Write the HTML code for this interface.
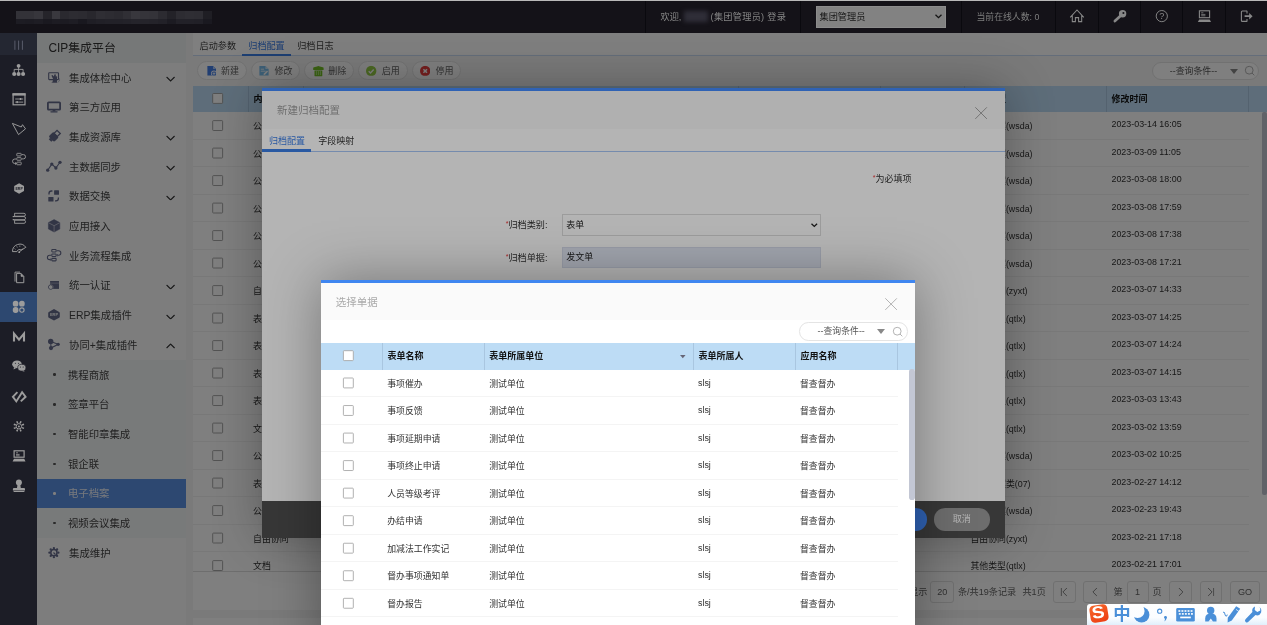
<!DOCTYPE html><html lang="zh"><head><meta charset="utf-8"><title>CIP</title><style>
*{box-sizing:border-box;margin:0;padding:0}
html,body{width:1267px;height:625px;overflow:hidden;background:#f5f5f5;font-family:"Liberation Sans","Noto Sans CJK SC",sans-serif;font-size:9px;color:#333}
.abs{position:absolute}
#top{position:absolute;left:0;top:0;width:1267px;height:33px;background:#141218;color:#fff;box-shadow:-4px 0 0 #141218,4px 0 0 #141218,0 -4px 0 #141218,-4px -4px 0 #141218,4px -4px 0 #141218}
#top .sep{position:absolute;top:0;width:1px;height:33px;background:#0a090e}
#top .t{position:absolute;top:0.8px;height:33px;line-height:33px;font-size:9.2px;color:#868686;white-space:nowrap}
#topsel{position:absolute;left:815.5px;top:5.5px;width:130px;height:22.3px;background:#828282;border:1px solid #8c8c8c;color:#161616;font-size:9.2px;line-height:20.3px;padding-left:3px}
#ibar{position:absolute;left:0;top:33px;width:37px;height:600px;background:#1c1d26;box-shadow:-4px 0 0 #1c1d26}
#ibar .c{position:absolute;left:0;width:37px;height:29.65px}
#ibar .c svg{position:absolute;left:50%;top:50%;transform:translate(-50%,-50%)}
#menu{position:absolute;left:37px;top:33px;width:148.6px;height:600px;background:#fbfcfd}
#menu .title{position:absolute;left:0;top:0;width:100%;height:29.8px;background:#eef1f3;font-size:11.9px;line-height:31.8px;padding-left:11.4px;color:#333}
#menu .it{position:absolute;left:0;width:100%;height:29.7px;line-height:29.7px;font-size:10.4px;color:#444;white-space:nowrap}
#menu .it .tx{position:absolute;left:32px;top:0.8px}
#menu .it svg.ic{position:absolute;left:10px;top:50%;transform:translateY(-50%)}
#menu .it svg.ch{position:absolute;left:129px;top:50%;margin-top:1.3px;transform:translateY(-50%)}
#menu .sub{position:absolute;left:0;width:100%;background:#f3f5f6}
#menu .it.on{background:#5b92e4;color:#f0f3fa}
#menu .dot{position:absolute;left:16.2px;top:50%;width:2.4px;height:2.4px;margin-top:-1.2px;border-radius:50%;background:#555}
#menu .it.on .dot{background:#fff}
#main{position:absolute;left:193px;top:33px;width:1080px;height:577px}
#main2{position:absolute;left:193px;top:617.6px;width:1080px;height:14px;background:#fff}
.tabs{position:absolute;left:0;top:0;width:100%;height:22.6px;border-bottom:1px solid #c9dcf5;background:#fff}
.tabs span{position:absolute;top:1.5px;height:22.6px;line-height:22px;font-size:9.1px;color:#444;white-space:nowrap}
.tabs span.on{color:#3b7ee6}
.tabs i{position:absolute;bottom:-1px;height:1.8px;background:#3b7ee6}
.tb{position:absolute;height:19px;border:1px solid #e6e6e6;border-radius:9.5px;background:#fff;font-size:9px;line-height:18.6px;color:#666;white-space:nowrap}
.tb svg{position:absolute;left:9px;top:50%;transform:translateY(-50%)}
.tb span{position:absolute;left:22.8px;top:0}
.pill{position:absolute;height:18.6px;border:1px solid #e4e4e4;border-radius:9.3px;background:#fff;font-size:8.9px;color:#555;white-space:nowrap}
.th{position:absolute;background:#bddcf5;font-weight:bold;color:#111}
.th .c,.tr .c{position:absolute;top:0;height:100%;white-space:nowrap;overflow:hidden}
.th .c{border-right:1px solid #a9c6e0}
.tr{position:absolute;border-bottom:1px solid #f2f2f2;color:#333}
.cb{position:absolute;width:10.7px;height:10.7px;border:1px solid #c8c8c8;background:#fff;border-radius:1px}
.mask{position:absolute;left:-4px;top:-4px;width:1275px;height:633px;background:rgba(0,0,0,0.295)}
#all{position:absolute;left:-4px;top:-4px;width:1275px;height:633px;overflow:hidden;background:#f5f5f5;filter:blur(0.3px)}
#in{position:absolute;left:4px;top:4px;width:1267px;height:625px}
</style></head><body><div id="all"><div id="in">
<div id="menu"><div class="title">CIP集成平台</div>
<div class="it" style="top:29.80px"><span class="tx">集成体检中心</span><svg class="ch" width="9.2" height="5.6" viewBox="0 0 9.2 5.6" style=""><path d="M0.6 0.8 L4.6 4.8 L8.6 0.8" fill="none" stroke="#333" stroke-width="1.1"/></svg></div>
<div class="it" style="top:59.50px"><span class="tx">第三方应用</span></div>
<div class="it" style="top:89.20px"><span class="tx">集成资源库</span><svg class="ch" width="9.2" height="5.6" viewBox="0 0 9.2 5.6" style=""><path d="M0.6 0.8 L4.6 4.8 L8.6 0.8" fill="none" stroke="#333" stroke-width="1.1"/></svg></div>
<div class="it" style="top:118.90px"><span class="tx">主数据同步</span><svg class="ch" width="9.2" height="5.6" viewBox="0 0 9.2 5.6" style=""><path d="M0.6 0.8 L4.6 4.8 L8.6 0.8" fill="none" stroke="#333" stroke-width="1.1"/></svg></div>
<div class="it" style="top:148.60px"><span class="tx">数据交换</span><svg class="ch" width="9.2" height="5.6" viewBox="0 0 9.2 5.6" style=""><path d="M0.6 0.8 L4.6 4.8 L8.6 0.8" fill="none" stroke="#333" stroke-width="1.1"/></svg></div>
<div class="it" style="top:178.30px"><span class="tx">应用接入</span></div>
<div class="it" style="top:208.00px"><span class="tx">业务流程集成</span></div>
<div class="it" style="top:237.70px"><span class="tx">统一认证</span><svg class="ch" width="9.2" height="5.6" viewBox="0 0 9.2 5.6" style=""><path d="M0.6 0.8 L4.6 4.8 L8.6 0.8" fill="none" stroke="#333" stroke-width="1.1"/></svg></div>
<div class="it" style="top:267.40px"><span class="tx">ERP集成插件</span><svg class="ch" width="9.2" height="5.6" viewBox="0 0 9.2 5.6" style=""><path d="M0.6 0.8 L4.6 4.8 L8.6 0.8" fill="none" stroke="#333" stroke-width="1.1"/></svg></div>
<div class="it" style="top:297.10px"><span class="tx">协同+集成插件</span><svg class="ch" width="9.2" height="5.6" viewBox="0 0 9.2 5.6" style=""><path d="M0.6 4.8 L4.6 0.8 L8.6 4.8" fill="none" stroke="#333" stroke-width="1.1"/></svg></div>
<div class="sub" style="top:326.80px;height:178.20px"></div>
<div class="it" style="top:326.80px"><i class="dot"></i><span class="tx" style="left:30.9px">携程商旅</span></div>
<div class="it" style="top:356.50px"><i class="dot"></i><span class="tx" style="left:30.9px">签章平台</span></div>
<div class="it" style="top:386.20px"><i class="dot"></i><span class="tx" style="left:30.9px">智能印章集成</span></div>
<div class="it" style="top:415.90px"><i class="dot"></i><span class="tx" style="left:30.9px">银企联</span></div>
<div class="it on" style="top:445.60px"><i class="dot"></i><span class="tx" style="left:30.9px">电子档案</span></div>
<div class="it" style="top:475.30px"><i class="dot"></i><span class="tx" style="left:30.9px">视频会议集成</span></div>
<div class="it" style="top:505.00px"><span class="tx">集成维护</span></div>
<svg width="149" height="592" viewBox="37 33 149 592" style="position:absolute;left:0;top:0"><rect x="48.7" y="72.7" width="9.8" height="6.9" rx="0.6" fill="none" stroke="#666b8c" stroke-width="1.1"/><path d="M51.4 75.6 L52.6 74.9 L53.7 76.5 L54.6 74.2 L55.8 74.5 L55.8 76.4 L57 76.2 L57 82.4 L52.3 82.4 L53.2 79.2 Z" fill="#666b8c"/><path d="M57.6 77.2 a2.6 2.6 0 0 1 0.4 4.9" fill="none" stroke="#666b8c" stroke-width="0.6" opacity="0.7"/><path d="M51.6 82.6 H57.4" stroke="#666b8c" stroke-width="0.7" opacity="0.7"/><rect x="47.9" y="102.4" width="12.2" height="7.2" rx="0.7" fill="none" stroke="#666b8c" stroke-width="1.8"/><rect x="52.6" y="110" width="2.8" height="1.4" fill="#666b8c"/><rect x="50.4" y="111.2" width="7.2" height="1.2" rx="0.4" fill="#666b8c"/><g transform="translate(53.7 136.9) rotate(45)"><rect x="-3.9" y="-3.4" width="7.8" height="6.8" rx="1.4" fill="#666b8c"/><rect x="-2.3" y="-7" width="4.6" height="4.4" fill="none" stroke="#666b8c" stroke-width="1.3"/><rect x="-1.8" y="3" width="3.6" height="2.2" fill="#666b8c"/></g><path d="M47.7 170.2 L51.8 164.1 L55.9 168 L60 162.3" fill="none" stroke="#666b8c" stroke-width="1.1"/><circle cx="47.7" cy="170.2" r="1.65" fill="#666b8c"/><circle cx="51.8" cy="164.1" r="1.65" fill="#666b8c"/><circle cx="55.9" cy="168" r="1.65" fill="#666b8c"/><circle cx="60" cy="162.3" r="1.65" fill="#666b8c"/><rect x="54.1" y="190.3" width="4.9" height="4.5" rx="0.5" fill="#666b8c"/><rect x="48.3" y="196.9" width="5.2" height="4.6" rx="0.5" fill="#666b8c"/><path d="M49 194.4 V193.4 a2.4 2.4 0 0 1 2.4 -2.4 H52.4 M58.4 197.4 V198.4 a2.4 2.4 0 0 1 -2.4 2.4 H55" fill="none" stroke="#666b8c" stroke-width="1.3"/><path d="M54.1 219.6 L59.8 222.6 V229 L54.1 232 L48.4 229 V222.6 Z" fill="#666b8c" stroke="#666b8c" stroke-width="0.5" stroke-linejoin="round"/><path d="M48.6 222.8 L54.1 225.7 L59.6 222.8 M54.1 225.7 V231.8" fill="none" stroke="#fbfcfd" stroke-width="0.7" opacity="0.75"/><rect x="51.8" y="249.45" width="4.3" height="2.5" rx="0.6" fill="none" stroke="#666b8c" stroke-width="1.05"/><rect x="51.8" y="253.95" width="4.3" height="2.5" rx="0.6" fill="none" stroke="#666b8c" stroke-width="1.05"/><rect x="51.8" y="258.35" width="4.3" height="2.5" rx="0.6" fill="none" stroke="#666b8c" stroke-width="1.05"/><path d="M56.8 250.7 H58.6 a2.25 2.25 0 0 1 0 4.5 H57.2 M51 255.2 H49.6 a2.2 2.2 0 0 0 0 4.4 H50.6" fill="none" stroke="#666b8c" stroke-width="1.05"/><path d="M57.9 254.2 L56.8 255.2 L57.9 256.2 M50 258.6 L51.1 259.6 L50 260.6" fill="none" stroke="#666b8c" stroke-width="0.7"/><rect x="50.1" y="281" width="8.9" height="7.9" fill="#666b8c"/><path d="M50.1 283.1 H59" stroke="#fbfcfd" stroke-width="0.5" opacity="0.7"/><circle cx="50.7" cy="287.1" r="2.7" fill="#fbfcfd"/><circle cx="50.7" cy="287.1" r="2.2" fill="none" stroke="#666b8c" stroke-width="0.9"/><circle cx="50.7" cy="287.1" r="1.7" fill="#fbfcfd"/><path d="M54 309 L59.2 311.9 Q59.8 312.2 59.8 312.9 V316.7 Q59.8 317.4 59.2 317.7 L54 320.6 L48.8 317.7 Q48.2 317.4 48.2 316.7 V312.9 Q48.2 312.2 48.8 311.9 Z" fill="#666b8c"/><text x="54" y="316.2" font-size="4" font-weight="bold" text-anchor="middle" fill="#fbfcfd" font-family="Liberation Sans,sans-serif">ERP</text><path d="M50.7 341.4 L58.2 344.3 L51 348.1 Z" fill="none" stroke="#666b8c" stroke-width="1.1"/><circle cx="50.7" cy="341.4" r="2.7" fill="#666b8c"/><circle cx="58.2" cy="344.3" r="1.6" fill="#666b8c"/><circle cx="51" cy="348.1" r="2.1" fill="#666b8c"/><circle cx="58.40" cy="552.70" r="1.15" fill="#666b8c"/><circle cx="57.08" cy="555.88" r="1.15" fill="#666b8c"/><circle cx="53.90" cy="557.20" r="1.15" fill="#666b8c"/><circle cx="50.72" cy="555.88" r="1.15" fill="#666b8c"/><circle cx="49.40" cy="552.70" r="1.15" fill="#666b8c"/><circle cx="50.72" cy="549.52" r="1.15" fill="#666b8c"/><circle cx="53.90" cy="548.20" r="1.15" fill="#666b8c"/><circle cx="57.08" cy="549.52" r="1.15" fill="#666b8c"/><circle cx="53.9" cy="552.7" r="3.1" fill="none" stroke="#666b8c" stroke-width="1.5"/><path d="M53.5 552.5 l1.8 1.8" stroke="#666b8c" stroke-width="1.2"/></svg>
</div>
<div id="main">
<div class="tabs"><span style="left:6.6px">启动参数</span><span class="on" style="left:55.3px">归档配置</span><span style="left:104.2px">归档日志</span><i style="left:48.8px;width:48.8px"></i></div>
<div class="tb" style="left:4.2px;top:28.2px;width:49.6px"><svg width="9.6" height="10.8" viewBox="0 0 9.6 10.8" style="left:8.4px"><path d="M0.4 0.3 H6 L9.2 3.4 V10.6 H0.4 Z" fill="#457fe6"/><path d="M6 0.3 V3.4 H9.2 Z" fill="#a9c8fa"/><circle cx="7" cy="8" r="3" fill="#f4f7ff"/><circle cx="7" cy="8" r="2.2" fill="#457fe6"/><path d="M7 6.6 V9.4 M5.6 8 H8.4" stroke="#fff" stroke-width="0.8"/></svg><span>新建</span></div>
<div class="tb" style="left:57.8px;top:28.2px;width:49.6px"><svg width="10" height="10.8" viewBox="0 0 10 10.8" style="left:7.5px"><path d="M0.4 0.3 H6.4 L9.6 3.4 V10.6 H0.4 Z" fill="#7cc0ee"/><path d="M6.4 0.3 V3.4 H9.6 Z" fill="#cfe8fa"/><path d="M1.8 3.6 H5 M1.8 5.6 H6.6" stroke="#fff" stroke-width="0.8"/><path d="M4.4 9.6 L4.9 7.9 L8 4.9 L9.1 6 L6 9.1 Z" fill="#fff"/></svg><span>修改</span></div>
<div class="tb" style="left:111.4px;top:28.2px;width:49.6px"><svg width="10.8" height="11" viewBox="0 0 10.8 11" style="left:7.7px"><path d="M0.2 4.4 V2.6 Q0.2 1.9 1 1.8 L4 0.9 Q5.4 0.2 6.8 0.9 L9.8 1.8 Q10.6 1.9 10.6 2.6 V4.4 Z" fill="#76c625"/><path d="M1.5 5 H9.3 V10.2 Q9.3 10.9 8.6 10.9 H2.2 Q1.5 10.9 1.5 10.2 Z" fill="#76c625"/><path d="M3.4 5.6 V9.6 M5.4 5.6 V9.6 M7.4 5.6 V9.6" stroke="#c2ec98" stroke-width="0.8"/></svg><span>删除</span></div>
<div class="tb" style="left:165.0px;top:28.2px;width:49.6px"><svg width="10.4" height="10.4" viewBox="0 0 10.4 10.4" style="left:7.4px"><circle cx="5.2" cy="5.2" r="5.2" fill="#98d048"/><path d="M2.7 5.4 L4.5 7.1 L7.7 3.8" fill="none" stroke="#fff" stroke-width="1.4"/></svg><span>启用</span></div>
<div class="tb" style="left:218.6px;top:28.2px;width:49.6px"><svg width="10.4" height="10.4" viewBox="0 0 10.4 10.4" style="left:7.4px"><circle cx="5.2" cy="5.2" r="5.2" fill="#ea4040"/><path d="M3.4 3.4 L7 7 M7 3.4 L3.4 7" fill="none" stroke="#fff" stroke-width="1.6"/></svg><span>停用</span></div>
<div class="pill" style="left:958.8px;top:28.5px;width:107.6px;line-height:16.6px"><span class="abs" style="left:17px;top:0">--查询条件--</span><svg width="8" height="5" viewBox="0 0 8 5" style="position:absolute;left:77.50px;top:6.70px;overflow:visible"><path d="M0 0 H8 L4 5 Z" fill="#888"/></svg><svg width="9.5" height="9.5" viewBox="0 0 9.5 9.5" style="position:absolute;left:92.65px;top:3.85px;overflow:visible"><circle cx="4.2" cy="4.2" r="3.9" fill="none" stroke="#aaa" stroke-width="0.9"/><path d="M7 7 L9.3 9.3" stroke="#aaa" stroke-width="0.9"/></svg></div>
<div class="abs" style="left:0;top:52.7px;width:1080px;height:524.3px;background:#fff"></div>
<div class="th" style="left:0;top:52.7px;width:1080px;height:26.4px;line-height:26.4px;font-size:9px">
<div class="c" style="left:0.0px;width:55.6px;padding-left:5px"></div>
<div class="c" style="left:55.6px;width:55.6px;padding-left:5px">内容类型</div>
<div class="c" style="left:111.2px;width:434.8px;padding-left:5px">单据名称</div>
<div class="c" style="left:546.0px;width:142.3px;padding-left:5px">创建人</div>
<div class="c" style="left:688.3px;width:83.7px;padding-left:5px">状态</div>
<div class="c" style="left:772.0px;width:141.5px;padding-left:5px">档案类型</div>
<div class="c" style="left:913.5px;width:142.0px;padding-left:5px">修改时间</div>
</div>
<div class="tr" style="left:0;top:79.10px;width:1055.5px;height:27.50px;line-height:25px;font-size:8.9px">
<div class="c" style="left:60.1px;width:50px;line-height:29px">公文</div>
<div class="c" style="left:116.2px;width:300px;line-height:29px">发文单</div>
<div class="c" style="left:777.4px;width:130px;line-height:29px">文书档案(wsda)</div>
<div class="c" style="left:918.5px;width:130px;line-height:25px">2023-03-14 16:05</div>
</div>
<div class="tr" style="left:0;top:106.60px;width:1055.5px;height:27.50px;line-height:25px;font-size:8.9px">
<div class="c" style="left:60.1px;width:50px;line-height:29px">公文</div>
<div class="c" style="left:116.2px;width:300px;line-height:29px">收文单</div>
<div class="c" style="left:777.4px;width:130px;line-height:29px">文书档案(wsda)</div>
<div class="c" style="left:918.5px;width:130px;line-height:25px">2023-03-09 11:05</div>
</div>
<div class="tr" style="left:0;top:134.10px;width:1055.5px;height:27.50px;line-height:25px;font-size:8.9px">
<div class="c" style="left:60.1px;width:50px;line-height:29px">公文</div>
<div class="c" style="left:116.2px;width:300px;line-height:29px">签报单</div>
<div class="c" style="left:777.4px;width:130px;line-height:29px">文书档案(wsda)</div>
<div class="c" style="left:918.5px;width:130px;line-height:25px">2023-03-08 18:00</div>
</div>
<div class="tr" style="left:0;top:161.60px;width:1055.5px;height:27.50px;line-height:25px;font-size:8.9px">
<div class="c" style="left:60.1px;width:50px;line-height:29px">公文</div>
<div class="c" style="left:116.2px;width:300px;line-height:29px">发文单</div>
<div class="c" style="left:777.4px;width:130px;line-height:29px">文书档案(wsda)</div>
<div class="c" style="left:918.5px;width:130px;line-height:25px">2023-03-08 17:59</div>
</div>
<div class="tr" style="left:0;top:189.10px;width:1055.5px;height:27.50px;line-height:25px;font-size:8.9px">
<div class="c" style="left:60.1px;width:50px;line-height:29px">公文</div>
<div class="c" style="left:116.2px;width:300px;line-height:29px">收文单</div>
<div class="c" style="left:777.4px;width:130px;line-height:29px">文书档案(wsda)</div>
<div class="c" style="left:918.5px;width:130px;line-height:25px">2023-03-08 17:38</div>
</div>
<div class="tr" style="left:0;top:216.60px;width:1055.5px;height:27.50px;line-height:25px;font-size:8.9px">
<div class="c" style="left:60.1px;width:50px;line-height:29px">公文</div>
<div class="c" style="left:116.2px;width:300px;line-height:29px">发文单</div>
<div class="c" style="left:777.4px;width:130px;line-height:29px">文书档案(wsda)</div>
<div class="c" style="left:918.5px;width:130px;line-height:25px">2023-03-08 17:21</div>
</div>
<div class="tr" style="left:0;top:244.10px;width:1055.5px;height:27.50px;line-height:25px;font-size:8.9px">
<div class="c" style="left:60.1px;width:50px;line-height:29px">自由协同</div>
<div class="c" style="left:116.2px;width:300px;line-height:29px">自由协同</div>
<div class="c" style="left:777.4px;width:130px;line-height:29px">自由协同(zyxt)</div>
<div class="c" style="left:918.5px;width:130px;line-height:25px">2023-03-07 14:33</div>
</div>
<div class="tr" style="left:0;top:271.60px;width:1055.5px;height:27.50px;line-height:25px;font-size:8.9px">
<div class="c" style="left:60.1px;width:50px;line-height:29px">表单</div>
<div class="c" style="left:116.2px;width:300px;line-height:29px">事项催办</div>
<div class="c" style="left:777.4px;width:130px;line-height:29px">其他类型(qtlx)</div>
<div class="c" style="left:918.5px;width:130px;line-height:25px">2023-03-07 14:25</div>
</div>
<div class="tr" style="left:0;top:299.10px;width:1055.5px;height:27.50px;line-height:25px;font-size:8.9px">
<div class="c" style="left:60.1px;width:50px;line-height:29px">表单</div>
<div class="c" style="left:116.2px;width:300px;line-height:29px">事项反馈</div>
<div class="c" style="left:777.4px;width:130px;line-height:29px">其他类型(qtlx)</div>
<div class="c" style="left:918.5px;width:130px;line-height:25px">2023-03-07 14:24</div>
</div>
<div class="tr" style="left:0;top:326.60px;width:1055.5px;height:27.50px;line-height:25px;font-size:8.9px">
<div class="c" style="left:60.1px;width:50px;line-height:29px">表单</div>
<div class="c" style="left:116.2px;width:300px;line-height:29px">办结申请</div>
<div class="c" style="left:777.4px;width:130px;line-height:29px">其他类型(qtlx)</div>
<div class="c" style="left:918.5px;width:130px;line-height:25px">2023-03-07 14:15</div>
</div>
<div class="tr" style="left:0;top:354.10px;width:1055.5px;height:27.50px;line-height:25px;font-size:8.9px">
<div class="c" style="left:60.1px;width:50px;line-height:29px">表单</div>
<div class="c" style="left:116.2px;width:300px;line-height:29px">督办报告</div>
<div class="c" style="left:777.4px;width:130px;line-height:29px">其他类型(qtlx)</div>
<div class="c" style="left:918.5px;width:130px;line-height:25px">2023-03-03 13:43</div>
</div>
<div class="tr" style="left:0;top:381.60px;width:1055.5px;height:27.50px;line-height:25px;font-size:8.9px">
<div class="c" style="left:60.1px;width:50px;line-height:29px">文档</div>
<div class="c" style="left:116.2px;width:300px;line-height:29px">文档</div>
<div class="c" style="left:777.4px;width:130px;line-height:29px">其他类型(qtlx)</div>
<div class="c" style="left:918.5px;width:130px;line-height:25px">2023-03-02 13:59</div>
</div>
<div class="tr" style="left:0;top:409.10px;width:1055.5px;height:27.50px;line-height:25px;font-size:8.9px">
<div class="c" style="left:60.1px;width:50px;line-height:29px">公文</div>
<div class="c" style="left:116.2px;width:300px;line-height:29px">发文单</div>
<div class="c" style="left:777.4px;width:130px;line-height:29px">文书档案(wsda)</div>
<div class="c" style="left:918.5px;width:130px;line-height:25px">2023-03-02 10:25</div>
</div>
<div class="tr" style="left:0;top:436.60px;width:1055.5px;height:27.50px;line-height:25px;font-size:8.9px">
<div class="c" style="left:60.1px;width:50px;line-height:29px">表单</div>
<div class="c" style="left:116.2px;width:300px;line-height:29px">人员等级考评</div>
<div class="c" style="left:777.4px;width:130px;line-height:29px">合同档案类(07)</div>
<div class="c" style="left:918.5px;width:130px;line-height:25px">2023-02-27 14:12</div>
</div>
<div class="tr" style="left:0;top:464.10px;width:1055.5px;height:27.50px;line-height:25px;font-size:8.9px">
<div class="c" style="left:60.1px;width:50px;line-height:29px">公文</div>
<div class="c" style="left:116.2px;width:300px;line-height:29px">收文单</div>
<div class="c" style="left:777.4px;width:130px;line-height:29px">文书档案(wsda)</div>
<div class="c" style="left:918.5px;width:130px;line-height:25px">2023-02-23 19:43</div>
</div>
<div class="tr" style="left:0;top:491.60px;width:1055.5px;height:27.50px;line-height:25px;font-size:8.9px">
<div class="c" style="left:60.1px;width:50px;line-height:29px">自由协同</div>
<div class="c" style="left:116.2px;width:300px;line-height:29px"></div>
<div class="c" style="left:777.4px;width:130px;line-height:29px">自由协同(zyxt)</div>
<div class="c" style="left:918.5px;width:130px;line-height:25px">2023-02-21 17:18</div>
</div>
<div class="tr" style="left:0;top:519.10px;width:1055.5px;height:25.40px;line-height:25px;font-size:8.9px;border-bottom:none">
<div class="c" style="left:60.1px;width:50px;line-height:29px">文档</div>
<div class="c" style="left:116.2px;width:300px;line-height:29px"></div>
<div class="c" style="left:777.4px;width:130px;line-height:29px">其他类型(qtlx)</div>
<div class="c" style="left:918.5px;width:130px;line-height:25px">2023-02-21 17:01</div>
</div>
<svg width="60" height="577" viewBox="193 33 60 577" style="position:absolute;left:0;top:0"><rect x="212.70" y="93.50" width="9.9" height="9.9" rx="0.7" fill="#fff" stroke="#9e9e9e" stroke-width="0.9"/><rect x="212.70" y="120.60" width="9.9" height="9.9" rx="0.7" fill="#fff" stroke="#9e9e9e" stroke-width="0.9"/><rect x="212.70" y="148.10" width="9.9" height="9.9" rx="0.7" fill="#fff" stroke="#9e9e9e" stroke-width="0.9"/><rect x="212.70" y="175.60" width="9.9" height="9.9" rx="0.7" fill="#fff" stroke="#9e9e9e" stroke-width="0.9"/><rect x="212.70" y="203.10" width="9.9" height="9.9" rx="0.7" fill="#fff" stroke="#9e9e9e" stroke-width="0.9"/><rect x="212.70" y="230.60" width="9.9" height="9.9" rx="0.7" fill="#fff" stroke="#9e9e9e" stroke-width="0.9"/><rect x="212.70" y="258.10" width="9.9" height="9.9" rx="0.7" fill="#fff" stroke="#9e9e9e" stroke-width="0.9"/><rect x="212.70" y="285.60" width="9.9" height="9.9" rx="0.7" fill="#fff" stroke="#9e9e9e" stroke-width="0.9"/><rect x="212.70" y="313.10" width="9.9" height="9.9" rx="0.7" fill="#fff" stroke="#9e9e9e" stroke-width="0.9"/><rect x="212.70" y="340.60" width="9.9" height="9.9" rx="0.7" fill="#fff" stroke="#9e9e9e" stroke-width="0.9"/><rect x="212.70" y="368.10" width="9.9" height="9.9" rx="0.7" fill="#fff" stroke="#9e9e9e" stroke-width="0.9"/><rect x="212.70" y="395.60" width="9.9" height="9.9" rx="0.7" fill="#fff" stroke="#9e9e9e" stroke-width="0.9"/><rect x="212.70" y="423.10" width="9.9" height="9.9" rx="0.7" fill="#fff" stroke="#9e9e9e" stroke-width="0.9"/><rect x="212.70" y="450.60" width="9.9" height="9.9" rx="0.7" fill="#fff" stroke="#9e9e9e" stroke-width="0.9"/><rect x="212.70" y="478.10" width="9.9" height="9.9" rx="0.7" fill="#fff" stroke="#9e9e9e" stroke-width="0.9"/><rect x="212.70" y="505.60" width="9.9" height="9.9" rx="0.7" fill="#fff" stroke="#9e9e9e" stroke-width="0.9"/><rect x="212.70" y="533.10" width="9.9" height="9.9" rx="0.7" fill="#fff" stroke="#9e9e9e" stroke-width="0.9"/><rect x="212.70" y="560.60" width="9.9" height="9.9" rx="0.7" fill="#fff" stroke="#9e9e9e" stroke-width="0.9"/></svg>
<div class="abs" style="left:1069px;top:79.1px;width:5px;height:382.5px;background:#c4c6d2;border-radius:2px"></div>
<div class="abs" style="left:0;top:538.2px;width:1080px;height:38.8px;border-top:1px solid #dedede;background:#fff;font-size:9.1px;color:#666">
<span class="abs" style="left:698px;top:0;line-height:40px">每页显示</span>
<div class="abs" style="left:737.4px;top:8.6px;width:23.8px;height:22.6px;border:1px solid #e2e2e2;border-radius:3px;background:#fff;text-align:center;line-height:21.4px;">20</div>
<span class="abs" style="left:765px;top:0;line-height:40px">条/共19条记录</span>
<span class="abs" style="left:829.5px;top:0;line-height:40px">共1页</span>
<div class="abs" style="left:859.7px;top:8.6px;width:23.3px;height:22.6px;border:1px solid #e2e2e2;border-radius:3px;background:#fff;text-align:center;line-height:21.4px;"><svg width="7.4" height="9" viewBox="0 0 7.4 9" style="position:absolute;left:50%;top:50%;transform:translate(-50%,-50%)"><path d="M1 0.5 V8.5" stroke="#888" stroke-width="1"/><path d="M6.6 0.5 L2.6 4.5 L6.6 8.5" fill="none" stroke="#888" stroke-width="1"/></svg></div>
<div class="abs" style="left:890.4px;top:8.6px;width:23.2px;height:22.6px;border:1px solid #e2e2e2;border-radius:3px;background:#fff;text-align:center;line-height:21.4px;"><svg width="7.4" height="9" viewBox="0 0 7.4 9" style="position:absolute;left:50%;top:50%;transform:translate(-50%,-50%)"><path d="M5.6 0.5 L1.6 4.5 L5.6 8.5" fill="none" stroke="#888" stroke-width="1"/></svg></div>
<span class="abs" style="left:920.6px;top:0;line-height:40px">第</span>
<div class="abs" style="left:933.5px;top:8.6px;width:22.1px;height:22.6px;border:1px solid #e2e2e2;border-radius:3px;background:#fff;text-align:center;line-height:21.4px;">1</div>
<span class="abs" style="left:959.5px;top:0;line-height:40px">页</span>
<div class="abs" style="left:976.4px;top:8.6px;width:22.6px;height:22.6px;border:1px solid #e2e2e2;border-radius:3px;background:#fff;text-align:center;line-height:21.4px;"><svg width="7.4" height="9" viewBox="0 0 7.4 9" style="position:absolute;left:50%;top:50%;transform:translate(-50%,-50%)"><path d="M1.6 0.5 L5.6 4.5 L1.6 8.5" fill="none" stroke="#888" stroke-width="1"/></svg></div>
<div class="abs" style="left:1006.8px;top:8.6px;width:22.6px;height:22.6px;border:1px solid #e2e2e2;border-radius:3px;background:#fff;text-align:center;line-height:21.4px;"><svg width="7.4" height="9" viewBox="0 0 7.4 9" style="position:absolute;left:50%;top:50%;transform:translate(-50%,-50%)"><path d="M6.4 0.5 V8.5" stroke="#888" stroke-width="1"/><path d="M0.8 0.5 L4.8 4.5 L0.8 8.5" fill="none" stroke="#888" stroke-width="1"/></svg></div>
<div class="abs" style="left:1037.2px;top:8.6px;width:29.6px;height:22.6px;border:1px solid #e2e2e2;border-radius:3px;background:#fff;text-align:center;line-height:21.4px;">GO</div>
</div>
</div>
<div id="main2"></div>
<div class="mask"></div>
<div class="abs" style="left:262.2px;top:87.6px;width:742.6px;height:450.4px;background:#fff;box-shadow:0 0 46px rgba(0,0,0,0.30)"><div class="abs" style="left:0;top:0;width:100%;height:3.9px;background:#438cff"></div><div class="abs" style="left:0;top:3.9px;width:100%;height:37.3px;background:#fafafa"></div><div class="abs" style="left:14.8px;top:4.7px;height:37.6px;line-height:37.6px;font-size:10.5px;color:#9c9c9c">新建归档配置</div><svg width="12.2" height="12.2" viewBox="0 0 12.2 12.2" style="position:absolute;left:712.50px;top:19.20px;overflow:visible"><path d="M0.3 0.3 L11.9 11.9 M11.9 0.3 L0.3 11.9" stroke="#999" stroke-width="0.9"/></svg><div class="abs" style="left:0;top:40.4px;width:100%;height:23.9px;border-bottom:1px solid #a6c6f5"></div><div class="abs" style="left:6.8px;top:41.5px;height:24px;line-height:25px;font-size:9px;color:#3b7ee6">归档配置</div><div class="abs" style="left:56px;top:41.5px;height:24px;line-height:25px;font-size:9px;color:#333">字段映射</div><div class="abs" style="left:0;top:61.2px;width:49px;height:3px;background:#3b7ee6"></div><div class="abs" style="left:610.6px;top:84px;line-height:14px;font-size:9px;color:#333;white-space:nowrap"><span style="color:#e33;font-size:7px;position:relative;top:-1.5px">*</span>为必填项</div><div class="abs" style="left:243.6px;top:130.4px;line-height:14px;font-size:9.1px;color:#333;white-space:nowrap"><span style="color:#e33;font-size:7px;position:relative;top:-1.5px">*</span>归档类别:</div><div class="abs" style="left:299.6px;top:126px;width:259.4px;height:22.4px;border:1px solid #dedede;background:#fff;font-size:9px;line-height:20.8px;padding-left:3.5px;color:#222">表单<svg width="6.6" height="3.96" viewBox="0 0 6.6 3.96" style="position:absolute;left:248.20px;top:8.42px;overflow:visible"><path d="M0.5 0.7 L3.3 3.46 L6.1 0.7" fill="none" stroke="#222" stroke-width="1.3"/></svg></div><div class="abs" style="left:243.6px;top:163px;line-height:14px;font-size:9.1px;color:#333;white-space:nowrap"><span style="color:#e33;font-size:7px;position:relative;top:-1.5px">*</span>归档单据:</div><div class="abs" style="left:299.6px;top:159.8px;width:259.4px;height:20.4px;border:1px solid #d6dceb;background:#e3e8f6;font-size:9px;line-height:19.4px;padding-left:3.5px;color:#222">发文单</div><div class="abs" style="left:0;top:413.4px;width:100%;height:37px;background:#4f4f4f"></div><div class="abs" style="left:608.6px;top:420.8px;width:56px;height:22.3px;border-radius:11.2px;background:#438cff;color:#fff;font-size:9.1px;line-height:22.3px;text-align:center">确定</div><div class="abs" style="left:671.7px;top:420.8px;width:56px;height:22.3px;border-radius:11.2px;background:#9b9b9b;color:#fff;font-size:9.1px;line-height:22.3px;text-align:center">取消</div></div>
<div class="mask"></div>
<div class="abs" style="left:321.0px;top:279.6px;width:594px;height:380px;background:#fff;box-shadow:0 0 52px rgba(0,0,0,0.35)"><div class="abs" style="left:0;top:0;width:100%;height:3.6px;background:#3f86f0"></div><div class="abs" style="left:0;top:3.6px;width:100%;height:37.3px;background:#fafafa"></div><div class="abs" style="left:14.8px;top:3.6px;height:38px;line-height:38px;font-size:10.5px;color:#aaa">选择单据</div><svg width="12.2" height="12.2" viewBox="0 0 12.2 12.2" style="position:absolute;left:563.90px;top:18.30px;overflow:visible"><path d="M0.3 0.3 L11.9 11.9 M11.9 0.3 L0.3 11.9" stroke="#aaa" stroke-width="0.9"/></svg><div class="pill" style="left:478.3px;top:42.7px;width:108.6px;height:18.4px;line-height:16.4px"><span class="abs" style="left:17.2px;top:0">--查询条件--</span><svg width="8" height="5" viewBox="0 0 8 5" style="position:absolute;left:76.90px;top:5.90px;overflow:visible"><path d="M0 0 H8 L4 5 Z" fill="#888"/></svg><svg width="9.5" height="9.5" viewBox="0 0 9.5 9.5" style="position:absolute;left:92.65px;top:3.35px;overflow:visible"><circle cx="4.2" cy="4.2" r="3.9" fill="none" stroke="#aaa" stroke-width="0.9"/><path d="M7 7 L9.3 9.3" stroke="#aaa" stroke-width="0.9"/></svg></div><div class="th" style="left:0;top:63.1px;width:594px;height:27px;line-height:27.4px;font-size:9px"><div class="c" style="left:0.0px;width:61.9px;padding-left:4.6px"></div><div class="c" style="left:61.9px;width:101.7px;padding-left:4.6px">表单名称</div><div class="c" style="left:163.6px;width:209.2px;padding-left:4.6px">表单所属单位</div><div class="c" style="left:372.8px;width:102.0px;padding-left:4.6px">表单所属人</div><div class="c" style="left:474.8px;width:101.8px;padding-left:4.6px">应用名称</div><svg width="5.6" height="3.2" viewBox="0 0 5.6 3.2" style="position:absolute;left:359.20px;top:12.70px;overflow:visible"><path d="M0 0 H5.6 L2.8 3.2 Z" fill="#667"/></svg></div><div class="tr" style="left:0;top:90.00px;width:576.7px;height:27.54px;font-size:8.9px;border-bottom-color:#f4f4f4"><div class="c" style="left:66.2px;width:97px;line-height:29.4px">事项催办</div><div class="c" style="left:168.2px;width:200px;line-height:29.4px">测试单位</div><div class="c" style="left:377px;width:97px;line-height:26.2px">slsj</div><div class="c" style="left:479px;width:97px;line-height:29.4px">督查督办</div></div><div class="tr" style="left:0;top:117.50px;width:576.7px;height:27.54px;font-size:8.9px;border-bottom-color:#f4f4f4"><div class="c" style="left:66.2px;width:97px;line-height:29.4px">事项反馈</div><div class="c" style="left:168.2px;width:200px;line-height:29.4px">测试单位</div><div class="c" style="left:377px;width:97px;line-height:26.2px">slsj</div><div class="c" style="left:479px;width:97px;line-height:29.4px">督查督办</div></div><div class="tr" style="left:0;top:145.00px;width:576.7px;height:27.54px;font-size:8.9px;border-bottom-color:#f4f4f4"><div class="c" style="left:66.2px;width:97px;line-height:29.4px">事项延期申请</div><div class="c" style="left:168.2px;width:200px;line-height:29.4px">测试单位</div><div class="c" style="left:377px;width:97px;line-height:26.2px">slsj</div><div class="c" style="left:479px;width:97px;line-height:29.4px">督查督办</div></div><div class="tr" style="left:0;top:172.50px;width:576.7px;height:27.54px;font-size:8.9px;border-bottom-color:#f4f4f4"><div class="c" style="left:66.2px;width:97px;line-height:29.4px">事项终止申请</div><div class="c" style="left:168.2px;width:200px;line-height:29.4px">测试单位</div><div class="c" style="left:377px;width:97px;line-height:26.2px">slsj</div><div class="c" style="left:479px;width:97px;line-height:29.4px">督查督办</div></div><div class="tr" style="left:0;top:200.00px;width:576.7px;height:27.54px;font-size:8.9px;border-bottom-color:#f4f4f4"><div class="c" style="left:66.2px;width:97px;line-height:29.4px">人员等级考评</div><div class="c" style="left:168.2px;width:200px;line-height:29.4px">测试单位</div><div class="c" style="left:377px;width:97px;line-height:26.2px">slsj</div><div class="c" style="left:479px;width:97px;line-height:29.4px">督查督办</div></div><div class="tr" style="left:0;top:227.50px;width:576.7px;height:27.54px;font-size:8.9px;border-bottom-color:#f4f4f4"><div class="c" style="left:66.2px;width:97px;line-height:29.4px">办结申请</div><div class="c" style="left:168.2px;width:200px;line-height:29.4px">测试单位</div><div class="c" style="left:377px;width:97px;line-height:26.2px">slsj</div><div class="c" style="left:479px;width:97px;line-height:29.4px">督查督办</div></div><div class="tr" style="left:0;top:255.00px;width:576.7px;height:27.54px;font-size:8.9px;border-bottom-color:#f4f4f4"><div class="c" style="left:66.2px;width:97px;line-height:29.4px">加减法工作实记</div><div class="c" style="left:168.2px;width:200px;line-height:29.4px">测试单位</div><div class="c" style="left:377px;width:97px;line-height:26.2px">slsj</div><div class="c" style="left:479px;width:97px;line-height:29.4px">督查督办</div></div><div class="tr" style="left:0;top:282.50px;width:576.7px;height:27.54px;font-size:8.9px;border-bottom-color:#f4f4f4"><div class="c" style="left:66.2px;width:97px;line-height:29.4px">督办事项通知单</div><div class="c" style="left:168.2px;width:200px;line-height:29.4px">测试单位</div><div class="c" style="left:377px;width:97px;line-height:26.2px">slsj</div><div class="c" style="left:479px;width:97px;line-height:29.4px">督查督办</div></div><div class="tr" style="left:0;top:310.00px;width:576.7px;height:27.54px;font-size:8.9px;border-bottom-color:#f4f4f4"><div class="c" style="left:66.2px;width:97px;line-height:29.4px">督办报告</div><div class="c" style="left:168.2px;width:200px;line-height:29.4px">测试单位</div><div class="c" style="left:377px;width:97px;line-height:26.2px">slsj</div><div class="c" style="left:479px;width:97px;line-height:29.4px">督查督办</div></div><div class="tr" style="left:0;top:337.50px;width:576.7px;height:27.54px;font-size:8.9px;border-bottom-color:#f4f4f4"><div class="c" style="left:66.2px;width:97px;line-height:29.4px">督办反馈</div><div class="c" style="left:168.2px;width:200px;line-height:29.4px">测试单位</div><div class="c" style="left:377px;width:97px;line-height:26.2px">slsj</div><div class="c" style="left:479px;width:97px;line-height:29.4px">督查督办</div></div><svg width="60" height="346" viewBox="321 279 60 346" style="position:absolute;left:0;top:-0.6px"><rect x="343.40" y="350.70" width="9.9" height="9.9" rx="0.7" fill="#fff" stroke="#a8a8a8" stroke-width="0.9"/><rect x="343.40" y="378.00" width="9.9" height="9.9" rx="0.7" fill="#fff" stroke="#a8a8a8" stroke-width="0.9"/><rect x="343.40" y="405.54" width="9.9" height="9.9" rx="0.7" fill="#fff" stroke="#a8a8a8" stroke-width="0.9"/><rect x="343.40" y="433.08" width="9.9" height="9.9" rx="0.7" fill="#fff" stroke="#a8a8a8" stroke-width="0.9"/><rect x="343.40" y="460.62" width="9.9" height="9.9" rx="0.7" fill="#fff" stroke="#a8a8a8" stroke-width="0.9"/><rect x="343.40" y="488.16" width="9.9" height="9.9" rx="0.7" fill="#fff" stroke="#a8a8a8" stroke-width="0.9"/><rect x="343.40" y="515.70" width="9.9" height="9.9" rx="0.7" fill="#fff" stroke="#a8a8a8" stroke-width="0.9"/><rect x="343.40" y="543.24" width="9.9" height="9.9" rx="0.7" fill="#fff" stroke="#a8a8a8" stroke-width="0.9"/><rect x="343.40" y="570.78" width="9.9" height="9.9" rx="0.7" fill="#fff" stroke="#a8a8a8" stroke-width="0.9"/><rect x="343.40" y="598.32" width="9.9" height="9.9" rx="0.7" fill="#fff" stroke="#a8a8a8" stroke-width="0.9"/><rect x="343.40" y="625.86" width="9.9" height="9.9" rx="0.7" fill="#fff" stroke="#a8a8a8" stroke-width="0.9"/></svg><div class="abs" style="left:588.2px;top:89.7px;width:5.6px;height:131px;background:#c3c7d4;border-radius:2.8px 2.8px 2.8px 2.8px"></div></div>
<div id="top">
<div class="abs" style="left:16px;top:10.9px;width:196px;height:14px;filter:blur(0.6px)">
<div class="abs" style="left:0.0px;top:0;width:9px;height:7.8px;background:rgb(51,50,56)"></div>
<div class="abs" style="left:0.0px;top:7.8px;width:9px;height:5.8px;background:rgb(29,28,35)"></div>
<div class="abs" style="left:8.9px;top:0;width:9px;height:7.8px;background:rgb(51,50,56)"></div>
<div class="abs" style="left:8.9px;top:7.8px;width:9px;height:5.8px;background:rgb(28,27,34)"></div>
<div class="abs" style="left:17.8px;top:0;width:9px;height:7.8px;background:rgb(55,54,60)"></div>
<div class="abs" style="left:17.8px;top:7.8px;width:9px;height:5.8px;background:rgb(30,29,36)"></div>
<div class="abs" style="left:26.6px;top:0;width:9px;height:7.8px;background:rgb(37,36,42)"></div>
<div class="abs" style="left:26.6px;top:7.8px;width:9px;height:5.8px;background:rgb(26,25,32)"></div>
<div class="abs" style="left:35.5px;top:0;width:9px;height:7.8px;background:rgb(57,56,62)"></div>
<div class="abs" style="left:35.5px;top:7.8px;width:9px;height:5.8px;background:rgb(29,28,35)"></div>
<div class="abs" style="left:44.4px;top:0;width:9px;height:7.8px;background:rgb(42,41,47)"></div>
<div class="abs" style="left:44.4px;top:7.8px;width:9px;height:5.8px;background:rgb(28,27,34)"></div>
<div class="abs" style="left:53.3px;top:0;width:9px;height:7.8px;background:rgb(45,44,50)"></div>
<div class="abs" style="left:53.3px;top:7.8px;width:9px;height:5.8px;background:rgb(30,29,36)"></div>
<div class="abs" style="left:62.2px;top:0;width:9px;height:7.8px;background:rgb(44,43,49)"></div>
<div class="abs" style="left:62.2px;top:7.8px;width:9px;height:5.8px;background:rgb(25,24,31)"></div>
<div class="abs" style="left:71.0px;top:0;width:9px;height:7.8px;background:rgb(40,39,45)"></div>
<div class="abs" style="left:71.0px;top:7.8px;width:9px;height:5.8px;background:rgb(31,30,37)"></div>
<div class="abs" style="left:79.9px;top:0;width:9px;height:7.8px;background:rgb(47,46,52)"></div>
<div class="abs" style="left:79.9px;top:7.8px;width:9px;height:5.8px;background:rgb(33,32,39)"></div>
<div class="abs" style="left:88.8px;top:0;width:9px;height:7.8px;background:rgb(45,44,50)"></div>
<div class="abs" style="left:88.8px;top:7.8px;width:9px;height:5.8px;background:rgb(34,33,40)"></div>
<div class="abs" style="left:97.7px;top:0;width:9px;height:7.8px;background:rgb(43,42,48)"></div>
<div class="abs" style="left:97.7px;top:7.8px;width:9px;height:5.8px;background:rgb(34,33,40)"></div>
<div class="abs" style="left:106.6px;top:0;width:9px;height:7.8px;background:rgb(48,47,53)"></div>
<div class="abs" style="left:106.6px;top:7.8px;width:9px;height:5.8px;background:rgb(35,34,41)"></div>
<div class="abs" style="left:115.4px;top:0;width:9px;height:7.8px;background:rgb(56,55,61)"></div>
<div class="abs" style="left:115.4px;top:7.8px;width:9px;height:5.8px;background:rgb(37,36,43)"></div>
<div class="abs" style="left:124.3px;top:0;width:9px;height:7.8px;background:rgb(53,52,58)"></div>
<div class="abs" style="left:124.3px;top:7.8px;width:9px;height:5.8px;background:rgb(37,36,43)"></div>
<div class="abs" style="left:133.2px;top:0;width:9px;height:7.8px;background:rgb(52,51,57)"></div>
<div class="abs" style="left:133.2px;top:7.8px;width:9px;height:5.8px;background:rgb(36,35,42)"></div>
<div class="abs" style="left:142.1px;top:0;width:9px;height:7.8px;background:rgb(44,43,49)"></div>
<div class="abs" style="left:142.1px;top:7.8px;width:9px;height:5.8px;background:rgb(34,33,40)"></div>
<div class="abs" style="left:151.0px;top:0;width:9px;height:7.8px;background:rgb(35,34,40)"></div>
<div class="abs" style="left:151.0px;top:7.8px;width:9px;height:5.8px;background:rgb(28,27,34)"></div>
<div class="abs" style="left:159.8px;top:0;width:9px;height:7.8px;background:rgb(45,44,50)"></div>
<div class="abs" style="left:159.8px;top:7.8px;width:9px;height:5.8px;background:rgb(34,33,40)"></div>
<div class="abs" style="left:168.7px;top:0;width:9px;height:7.8px;background:rgb(47,46,52)"></div>
<div class="abs" style="left:168.7px;top:7.8px;width:9px;height:5.8px;background:rgb(34,33,40)"></div>
<div class="abs" style="left:177.6px;top:0;width:9px;height:7.8px;background:rgb(46,45,51)"></div>
<div class="abs" style="left:177.6px;top:7.8px;width:9px;height:5.8px;background:rgb(33,32,39)"></div>
<div class="abs" style="left:186.5px;top:0;width:9px;height:7.8px;background:rgb(31,30,36)"></div>
<div class="abs" style="left:186.5px;top:7.8px;width:9px;height:5.8px;background:rgb(26,25,32)"></div>
</div>
<div class="sep" style="left:645.2px"></div>
<div class="sep" style="left:800.4px"></div>
<div class="sep" style="left:960.7px"></div>
<div class="sep" style="left:1054.6px"></div>
<div class="sep" style="left:1098.2px"></div>
<div class="sep" style="left:1140.2px"></div>
<div class="sep" style="left:1182.4px"></div>
<div class="sep" style="left:1225.3px"></div>
<div class="t" style="left:660.5px">欢迎,</div>
<div class="abs" style="left:684px;top:11px;width:24px;height:11px;background:#2f2e38;filter:blur(2px)"></div>
<div class="t" style="left:710.6px;letter-spacing:0.25px">(集团管理员) 登录</div>
<div id="topsel">集团管理员<svg width="7" height="4.2" viewBox="0 0 7 4.2" style="position:absolute;left:118.70px;top:7.60px;overflow:visible"><path d="M0.5 0.7 L3.5 3.7 L6.5 0.7" fill="none" stroke="#141414" stroke-width="1.3"/></svg></div>
<div class="t" style="left:976.5px;font-size:8.85px;color:#7e7e7e">当前在线人数: 0</div>
<svg width="1267" height="33" viewBox="0 0 1267 33" style="position:absolute;left:0;top:0"><path d="M1070.2 17.4 L1077 10 L1083.8 17.4 M1072.3 15.6 V21.6 H1075.4 V17.6 H1078.6 V21.6 H1081.7 V15.6" fill="none" stroke="#878787" stroke-width="1.05" stroke-linejoin="miter"/></svg>
<svg width="1267" height="33" viewBox="0 0 1267 33" style="position:absolute;left:0;top:0"><circle cx="1122.6" cy="13.8" r="3.7" fill="#878787"/><path d="M1120.6 15.8 L1114.9 21" stroke="#878787" stroke-width="2.7" stroke-linecap="round"/><circle cx="1123.4" cy="13" r="1.05" fill="#141218"/></svg>
<svg width="1267" height="33" viewBox="0 0 1267 33" style="position:absolute;left:0;top:0"><circle cx="1161.8" cy="16.1" r="5.6" fill="none" stroke="#878787" stroke-width="0.95"/><text x="1161.8" y="19.4" font-size="9.2" text-anchor="middle" fill="#878787" font-family="Liberation Sans,sans-serif">?</text></svg>
<svg width="1267" height="33" viewBox="0 0 1267 33" style="position:absolute;left:0;top:0"><rect x="1199.4" y="10.8" width="10.2" height="6.9" fill="none" stroke="#878787" stroke-width="1.1"/><path d="M1201.2 12.8 H1203.4 M1201.2 14.4 H1205.4 M1201.2 15.8 H1205.4" stroke="#878787" stroke-width="0.8"/><path d="M1199.2 19.4 H1209.7 L1211 22.1 H1197.8 Z" fill="#878787"/></svg>
<svg width="1267" height="33" viewBox="0 0 1267 33" style="position:absolute;left:0;top:0"><path d="M1247.2 11 H1242.4 a1 1 0 0 0 -1 1 V20.4 a1 1 0 0 0 1 1 H1247.2 M1247 11 V13.4 M1247 19 V21.4" fill="none" stroke="#878787" stroke-width="1.1"/><path d="M1244.6 15.3 H1249.2 V13 L1252.6 16.2 L1249.2 19.4 V17.1 H1244.6 Z" fill="#878787"/></svg>
</div>
<div id="ibar">
<div class="abs" style="left:0;top:0;width:37px;height:22.4px;background:#242732"></div>
<div class="abs" style="left:0;top:259px;width:37px;height:30px;background:#2d4870"></div>
<svg width="37" height="592" viewBox="0 33 37 592" style="position:absolute;left:0;top:0"><path d="M14.9 40.6 V49.8 M18.6 40.6 V49.8 M22.4 40.6 V49.8" stroke="#5a5d6c" stroke-width="1"/><circle cx="18.6" cy="65.8" r="1.9" fill="#9c9c9c"/><circle cx="14.2" cy="74" r="2.05" fill="#9c9c9c"/><circle cx="18.6" cy="74" r="2.05" fill="#9c9c9c"/><circle cx="23.1" cy="74" r="2.05" fill="#9c9c9c"/><path d="M18.6 67 V72.5 M14.2 72.5 V69.4 H23.1 V72.5" fill="none" stroke="#9c9c9c" stroke-width="0.9"/><rect x="13.1" y="93.9" width="11.9" height="10.9" fill="none" stroke="#9c9c9c" stroke-width="1.2"/><rect x="12.5" y="93.3" width="13.1" height="2.3" fill="#9c9c9c"/><path d="M15.2 99 H23.2 M15.2 102.1 H23.2" stroke="#9c9c9c" stroke-width="0.9"/><rect x="19.8" y="98" width="1.5" height="2" fill="#9c9c9c"/><rect x="16.4" y="101.1" width="1.5" height="2" fill="#9c9c9c"/><path d="M12.4 123.4 L21.3 127 L22.5 124.7 L25.5 128.8 L18.5 134.6 Z" fill="none" stroke="#9c9c9c" stroke-width="0.95" stroke-linejoin="round"/><rect x="16.8" y="153.35" width="4.4" height="2.6" rx="0.5" fill="none" stroke="#9c9c9c" stroke-width="0.85"/><rect x="16.8" y="157.65" width="4.4" height="2.6" rx="0.5" fill="none" stroke="#9c9c9c" stroke-width="0.85"/><rect x="16.8" y="162.15" width="4.4" height="2.6" rx="0.5" fill="none" stroke="#9c9c9c" stroke-width="0.85"/><path d="M21.8 154.6 H23.4 a2.15 2.15 0 0 1 0 4.3 H21.8 M16.2 159 H14.8 a2.25 2.25 0 0 0 0 4.5 H16" fill="none" stroke="#9c9c9c" stroke-width="0.9"/><path d="M15.2 162.3 L16.6 163.5 L15.2 164.7" fill="none" stroke="#9c9c9c" stroke-width="0.8"/><path d="M19.1 183.2 L24 186 V191 L19.1 193.8 L14.2 191 V186 Z" fill="#9c9c9c"/><text x="19.1" y="189.8" font-size="3.6" font-weight="bold" text-anchor="middle" fill="#1c1d26" font-family="Liberation Sans,sans-serif">ERP</text><path d="M14.4 213.3 H24 a1.3 1.3 0 0 1 0 2.9 H14.4 M13 216.6 H24 a1.4 1.4 0 0 1 0 3.1 H13 M12.6 216.6 H14 M12.6 219.7 H14 M14.4 220.2 H24 a1.4 1.4 0 0 1 0 3.1 H14.4 M14.6 213.3 V216.2 M14.6 220.2 V223.3" fill="none" stroke="#9c9c9c" stroke-width="0.9"/><path d="M12.5 251.6 A7.3 7.3 0 0 1 25.8 247.3 L21.4 250.2 A2.8 2.8 0 0 0 16.9 251.6 Z" fill="none" stroke="#9c9c9c" stroke-width="0.95" stroke-linejoin="round"/><path d="M19.3 252.2 L22.6 248.6" stroke="#9c9c9c" stroke-width="0.9"/><circle cx="19.2" cy="252.2" r="0.9" fill="#9c9c9c"/><path d="M14.6 248.6 L15.5 249.4 M16.8 246.4 L17.3 247.5 M19.8 245.6 L19.8 246.8" stroke="#9c9c9c" stroke-width="0.8"/><path d="M16.6 273.4 H21 L23.8 276.4 V282.7 H16.6 Z" fill="none" stroke="#9c9c9c" stroke-width="1" stroke-linejoin="round"/><path d="M21 273.4 V276.4 H23.8" fill="#9c9c9c" stroke="#9c9c9c" stroke-width="0.6"/><path d="M15 281.6 V272.1 H20" fill="none" stroke="#9c9c9c" stroke-width="0.9"/><rect x="12.8" y="300.7" width="5.6" height="5.8" rx="2.6" fill="#9c9c9c"/><rect x="19.1" y="300.7" width="5.6" height="5.8" rx="2.6" fill="#9c9c9c"/><rect x="12.8" y="307.1" width="5.6" height="5.8" rx="2.6" fill="#9c9c9c"/><circle cx="21.9" cy="310.1" r="2.2" fill="none" stroke="#9c9c9c" stroke-width="1.1"/><path d="M14 341.4 V333.6 L19 339.6 L24 333.6 V341.4" fill="none" stroke="#9c9c9c" stroke-width="2.1" stroke-linejoin="miter" stroke-miterlimit="6"/><ellipse cx="17" cy="364.3" rx="4.8" ry="3.9" fill="#9c9c9c"/><path d="M14 367 L13.6 369.4 L16.4 367.9 Z" fill="#9c9c9c"/><ellipse cx="21.8" cy="367.7" rx="4.1" ry="3.4" fill="#9c9c9c" stroke="#1c1d26" stroke-width="0.7"/><path d="M23.4 370.4 L24.8 371.8 L22 371 Z" fill="#9c9c9c"/><circle cx="15.4" cy="363.3" r="0.55" fill="#1c1d26"/><circle cx="18.6" cy="363.3" r="0.55" fill="#1c1d26"/><circle cx="20.4" cy="367" r="0.55" fill="#1c1d26"/><circle cx="23.2" cy="367" r="0.55" fill="#1c1d26"/><path d="M17.4 392.2 L12.9 396.8 L16.3 401.4 L22.1 392.2 L25.6 396.8 L20.8 401.4" fill="none" stroke="#9c9c9c" stroke-width="1.9" stroke-linejoin="miter"/><circle cx="18.9" cy="426.3" r="2.7" fill="none" stroke="#9c9c9c" stroke-width="1"/><path d="M22.04 427.60 L23.98 428.40" stroke="#9c9c9c" stroke-width="1.5"/><path d="M20.20 429.44 L21.00 431.38" stroke="#9c9c9c" stroke-width="1.5"/><path d="M17.60 429.44 L16.80 431.38" stroke="#9c9c9c" stroke-width="1.5"/><path d="M15.76 427.60 L13.82 428.40" stroke="#9c9c9c" stroke-width="1.5"/><path d="M15.76 425.00 L13.82 424.20" stroke="#9c9c9c" stroke-width="1.5"/><path d="M17.60 423.16 L16.80 421.22" stroke="#9c9c9c" stroke-width="1.5"/><path d="M20.20 423.16 L21.00 421.22" stroke="#9c9c9c" stroke-width="1.5"/><path d="M22.04 425.00 L23.98 424.20" stroke="#9c9c9c" stroke-width="1.5"/><circle cx="18.9" cy="426.5" r="1" fill="#9c9c9c"/><rect x="14.1" y="450.8" width="10" height="6.4" fill="none" stroke="#9c9c9c" stroke-width="1.2"/><path d="M16 452.8 H18 M16 454.4 H19.6 M16 455.8 H19.6" stroke="#9c9c9c" stroke-width="0.8"/><path d="M14 458.8 H24.2 L25.5 461.6 H12.6 Z" fill="#9c9c9c"/><circle cx="18.9" cy="482.4" r="3" fill="#9c9c9c"/><path d="M17.6 484 H20.2 L20.8 487.9 H24 a1 1 0 0 1 1 1 V490.6 H12.9 V488.9 a1 1 0 0 1 1 -1 H17 Z" fill="#9c9c9c"/><rect x="13.6" y="491" width="10.8" height="1" fill="#9c9c9c"/></svg>
</div>
<div class="abs" style="left:1086.6px;top:603.6px;width:186px;height:27px;background:linear-gradient(#fefefe 0%,#fbfdff 50%,#dfeefb 80%,#dfeefb 100%);border-radius:3px 0 0 0;overflow:hidden"></div><div class="abs" style="left:1089.6px;top:605px;width:18px;height:17.2px;border-radius:4.2px;background:linear-gradient(160deg,#f7682c,#ec3d12);transform:rotate(-9deg)"></div><div class="abs" style="left:1089.4px;top:603.4px;width:18.4px;height:20px;line-height:20px;text-align:center;font-size:17px;font-weight:bold;color:#fff;transform:rotate(-9deg) scaleX(1.12)">S</div><div class="abs" style="left:1113.2px;top:603.6px;height:21px;line-height:21px;font-size:17.4px;font-weight:bold;color:#4a8fd8">中</div><svg width="1267" height="625" viewBox="0 0 1267 625" style="position:absolute;left:0;top:0"><mask id="mm"><rect x="1130" y="600" width="24" height="26" fill="#fff"/><circle cx="1137.6" cy="611" r="7" fill="#000"/></mask><circle cx="1141.6" cy="614.7" r="7.8" fill="#4a8fd8" mask="url(#mm)"/><circle cx="1159.7" cy="611.2" r="2.1" fill="none" stroke="#4a8fd8" stroke-width="1.1"/><path d="M1164 617.6 a1.5 1.5 0 1 1 2.6 0.9 q-0.3 1.9 -2.6 3 q1.2 -1.3 0.9 -2.7 Q1164.3 618.5 1164 617.6 Z" fill="#4a8fd8"/><rect x="1176.2" y="608" width="18.6" height="13.6" rx="1.4" fill="#4a8fd8"/><rect x="1178.4" y="610.2" width="1.9" height="1.6" fill="#fff"/><rect x="1181.45" y="610.2" width="1.9" height="1.6" fill="#fff"/><rect x="1184.5" y="610.2" width="1.9" height="1.6" fill="#fff"/><rect x="1187.55" y="610.2" width="1.9" height="1.6" fill="#fff"/><rect x="1190.6" y="610.2" width="1.9" height="1.6" fill="#fff"/><rect x="1178.8" y="613.1" width="1.9" height="1.6" fill="#fff"/><rect x="1181.85" y="613.1" width="1.9" height="1.6" fill="#fff"/><rect x="1184.9" y="613.1" width="1.9" height="1.6" fill="#fff"/><rect x="1187.95" y="613.1" width="1.9" height="1.6" fill="#fff"/><rect x="1191" y="613.1" width="1.9" height="1.6" fill="#fff"/><rect x="1180.2" y="616.6" width="10.6" height="1.7" fill="#fff"/><circle cx="1210.7" cy="610.4" r="3.7" fill="#4a8fd8"/><path d="M1205.2 621.6 V618.4 Q1205.2 613.6 1210.8 613.6 Q1216.5 613.6 1216.5 618.4 V621.6 Z" fill="#4a8fd8"/><path d="M1208.4 621.8 L1210.8 618.6 L1213.2 621.8 Z" fill="#f0f6fd"/><path d="M1236.2 606.2 L1240.2 608.8 L1231.8 620.4 L1227.6 622.6 L1227.8 617.8 Z" fill="#4a8fd8"/><path d="M1236 609.4 L1238.6 611.2" stroke="#fff" stroke-width="0.7"/><path d="M1223 612.6 q1 -1.4 1.6 0.4 q0.5 2.6 1.3 3.2 q0.9 0.4 1.4 -1.6" fill="none" stroke="#4a8fd8" stroke-width="1"/><path d="M1257.2 606.2 a4.6 4.6 0 0 1 3.9 6.3 a4.6 4.6 0 0 1 -5.6 2.6 L1248.4 621.8 a1.9 1.9 0 0 1 -2.9 -2.6 L1252.4 612 a4.6 4.6 0 0 1 2.6 -5.4 l-0.3 3.3 l2.6 2.2 l3 -1.5 l-0.3 -3.4 Z" fill="#4a8fd8"/></svg>
</div></div>
<div class="abs" style="left:0;top:0;width:1267px;height:1px;background:#b9b9b9"></div>
</body></html>
